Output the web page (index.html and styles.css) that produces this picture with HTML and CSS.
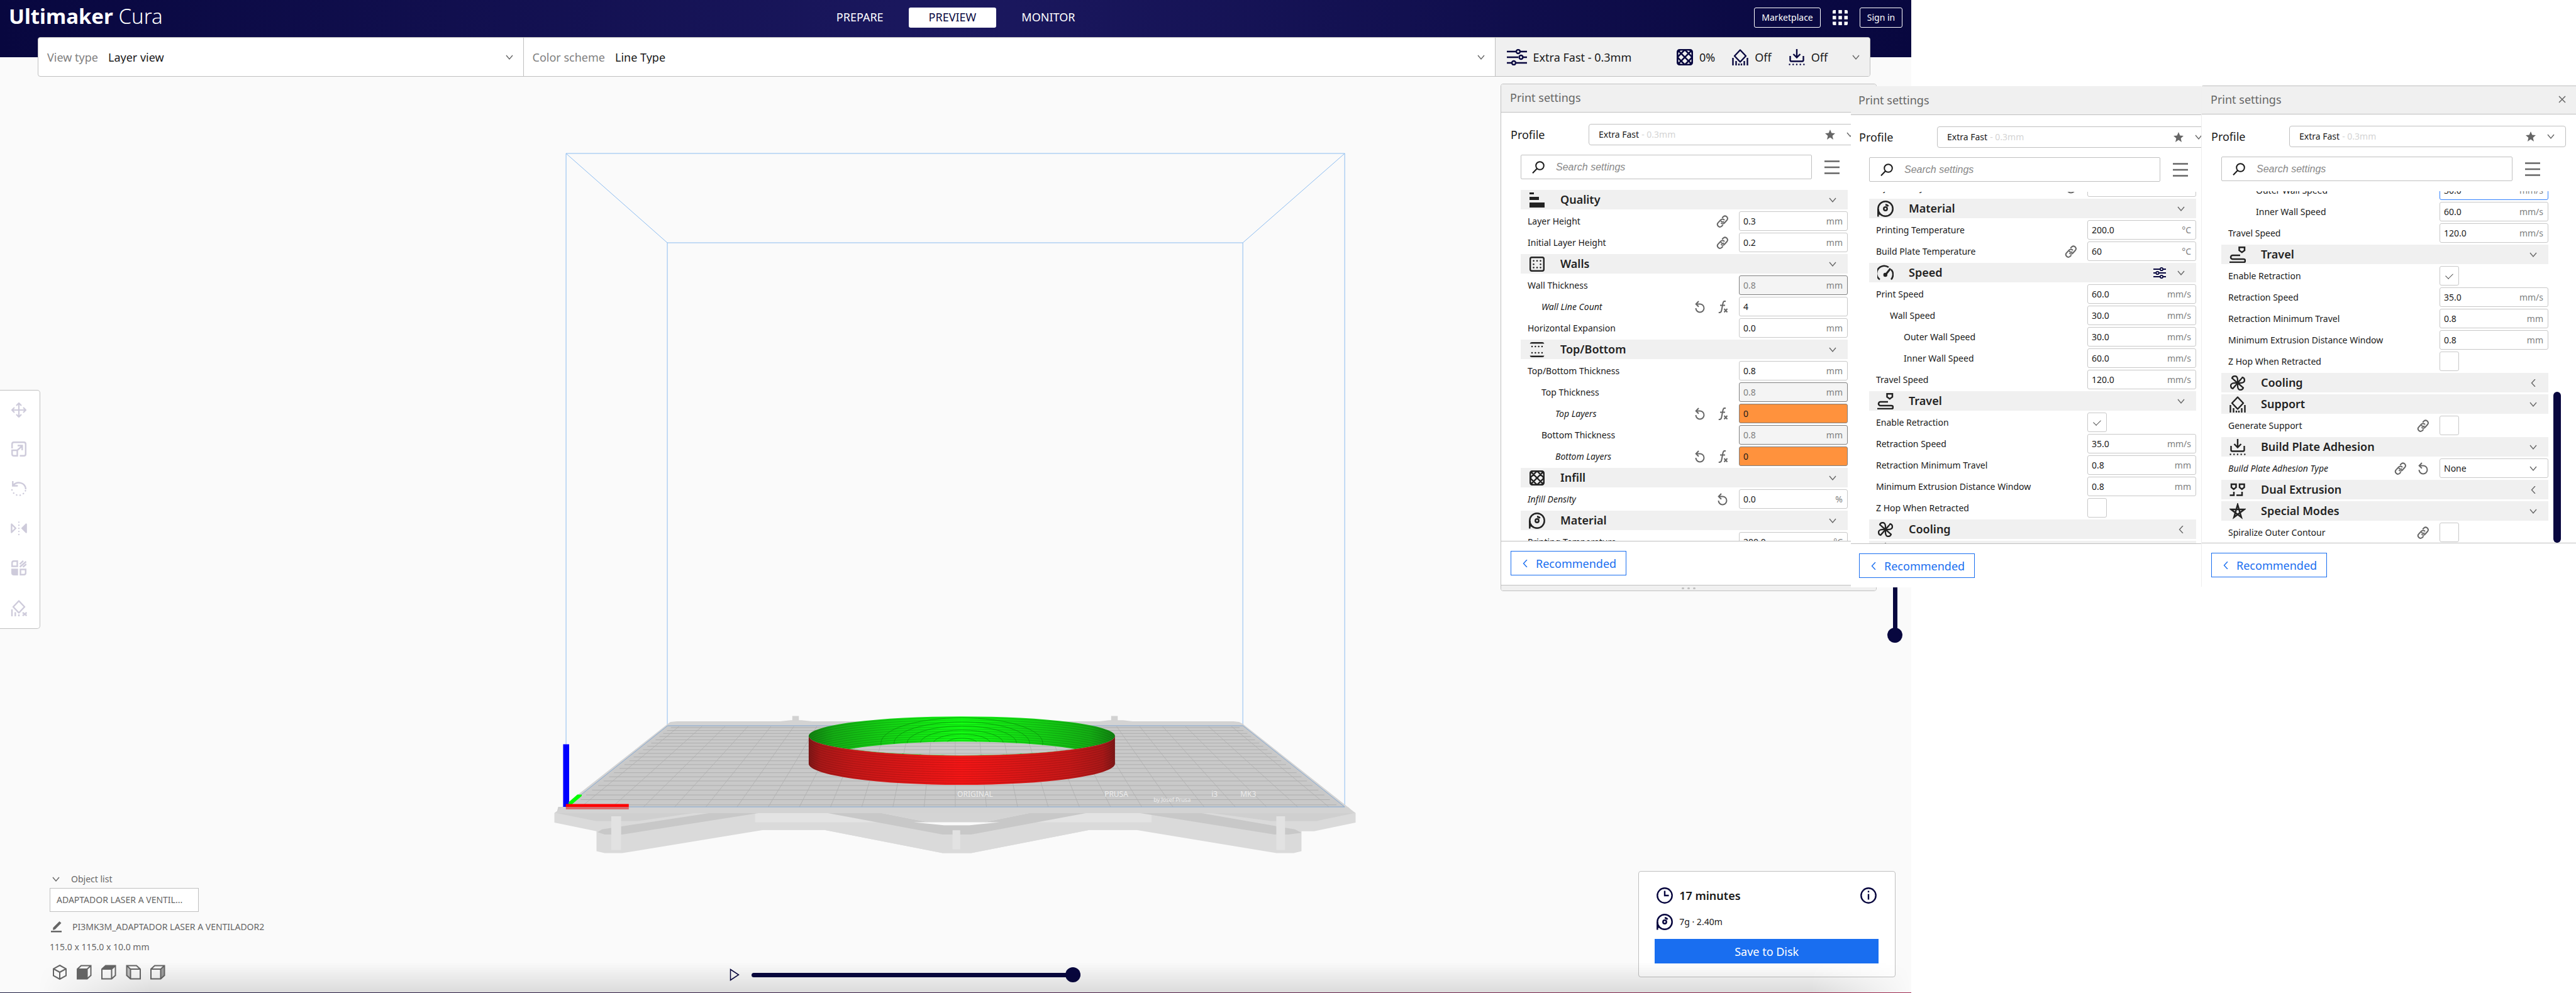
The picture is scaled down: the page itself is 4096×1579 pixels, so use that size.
FILE: index.html
```html
<!DOCTYPE html>
<html lang="en">
<head>
<meta charset="utf-8">
<title>Ultimaker Cura</title>
<link rel="stylesheet" href="styles.css">
</head>
<body>
<svg class="sprite" aria-hidden="true">
  <symbol id="down" viewBox="0 0 12 12"><path d="M1 3l5 6 5-6" fill="none" stroke="currentColor" stroke-width="1.4"/></symbol>
  <symbol id="left" viewBox="0 0 12 12"><path d="M9 0L3.500 6 9 12" fill="none" stroke="currentColor" stroke-width="1.4"/></symbol>
  <symbol id="close" viewBox="0 0 12 12"><path d="M1 1l10 10M11 1L1 11" stroke="currentColor" stroke-width="1.5"/></symbol>
  <symbol id="star" viewBox="0 0 16 16"><path d="M8 0l2.300 5.600 5.700.5-4.400 4 1.400 5.900L8 12.600 3 16l1.400-5.900L0 6.100l5.700-.5z" fill="currentColor"/></symbol>
  <symbol id="search" viewBox="0 0 20 20"><g fill="none" stroke="currentColor" stroke-width="2"><circle cx="12.500" cy="7.500" r="6.300"/><path d="M8 12L1 19.300"/></g></symbol>
  <symbol id="burger" viewBox="0 0 24 22"><path d="M0 1.500h24M0 11h24M0 20.500h24" stroke="currentColor" stroke-width="2.600"/></symbol>
  <symbol id="link" viewBox="0 0 20 20"><g fill="none" stroke="currentColor" stroke-width="2" stroke-linecap="round"><path d="M11.500 10.800A3.500 3.500 0 0 1 7.800 9.800M8 13a4 4 0 0 0 5-.5l4-4.500a4 4 0 0 0-5.500-5.700L9.800 4"/><path d="M12.500 7.500a4 4 0 0 0-5.500.3l-4.300 4.500a4 4 0 0 0 5.500 5.700l1.800-1.800"/></g></symbol>
  <symbol id="revert" viewBox="0 0 20 20"><g fill="none" stroke="currentColor" stroke-width="2"><path d="M4 5.500h6.500a6.500 6.500 0 1 1-7 6.500"/><path d="M8 1L3.700 5.500 8 9.800"/></g></symbol>
  <symbol id="fx" viewBox="0 0 20 20"><g fill="none" stroke="currentColor" stroke-width="2"><path d="M15 1.200c-3-1-4 .8-4.500 3.300L8.500 15c-.6 3-1.700 4.600-4.700 3.700M6 7.500h8"/><path d="M12.500 13l5 5.500M17.500 13l-5 5.500"/></g></symbol>
  <symbol id="sliders" viewBox="0 0 32 26"><g fill="none" stroke="currentColor" stroke-width="2.400"><path d="M0 4h14M22 4h10M0 13h18M26 13h6M0 22h7M15 22h17"/><circle cx="18" cy="4" r="3"/><circle cx="22.500" cy="13" r="3"/><circle cx="11" cy="22" r="3"/></g></symbol>
  <symbol id="tune" viewBox="0 0 20 18"><g fill="none" stroke="currentColor" stroke-width="1.800"><path d="M0 3h10.500M15.500 3H20M0 9h4M9 9h11M0 15h10.500M15.500 15H20"/><circle cx="13" cy="3" r="2.200"/><circle cx="6.500" cy="9" r="2.200"/><circle cx="13" cy="15" r="2.200"/></g></symbol>
  <symbol id="quality" viewBox="0 0 24 24"><path d="M0 0h7v3H0zM0 7h15v5H0zM0 16h24v8H0z" fill="currentColor"/></symbol>
  <symbol id="walls" viewBox="0 0 24 24"><rect x="1.200" y="1.200" width="21.600" height="21.600" rx="2.500" fill="none" stroke="currentColor" stroke-width="2.400"/><path d="M6.500 6.800h11.500M6.500 12.200h.1M17.500 12.200h.1M6.500 17.500h11.500" stroke="currentColor" stroke-width="2.600" stroke-linecap="round" stroke-dasharray=".1 5.400"/></symbol>
  <symbol id="topbottom" viewBox="0 0 24 24"><path d="M.5 2.500Q1 0 3.500 0h17Q23 0 23.500 2.500zM.5 21.500Q1 24 3.500 24h17q2.500 0 3-2.500z" fill="currentColor"/><path d="M4 7h17M4 17h17" stroke="currentColor" stroke-width="2.400" stroke-linecap="round" stroke-dasharray=".1 5.200"/></symbol>
  <symbol id="infill" viewBox="0 0 24 24"><rect x="1.200" y="1.200" width="21.600" height="21.600" rx="3" fill="none" stroke="currentColor" stroke-width="2.400"/><path d="M2 2l20 20M22 2L2 22M12 1l11 11-11 11L1 12zM1 5l4-4M19 1l4 4M1 19l4 4M23 19l-4 4" fill="none" stroke="currentColor" stroke-width="2.400"/></symbol>
  <symbol id="material" viewBox="0 0 26 26"><g fill="none" stroke="currentColor" stroke-width="2.500"><circle cx="13" cy="13" r="11.700"/><circle cx="13" cy="13" r="2.700"/><path d="M13 6.500q3 .3 4.500 2.500" stroke-width="3"/><path d="M1.300 13v12.500"/><path d="M1.300 18l3 4" stroke-width="3"/></g></symbol>
  <symbol id="speed" viewBox="0 0 26 26"><g fill="none" stroke="currentColor" stroke-width="2.500"><path d="M4 23.500A12 12 0 0 1 18 4M22 7.500a12 12 0 0 1 0 16"/><path d="M13 16L21 6" stroke-width="3"/></g><circle cx="12.800" cy="16" r="3.200" fill="currentColor"/></symbol>
  <symbol id="travel" viewBox="0 0 26 26"><g fill="none" stroke="currentColor" stroke-width="2.500"><path d="M15.500 1.200h8.500v5l-4.200 3-4.300-3z"/><path d="M17 14H5a3 3 0 0 0 0 6h17.500a2 2 0 0 1 0 5H0"/></g></symbol>
  <symbol id="cooling" viewBox="0 0 24 24"><g fill="none" stroke="currentColor" stroke-width="2.300" stroke-linejoin="round"><path id="blade" d="M12 12C8 9 4.500 5 3 4.500 4 .5 10-.5 11.500 4c.8 2.500.5 5 .5 8z"/><use href="#blade" transform="rotate(90 12 12)"/><use href="#blade" transform="rotate(180 12 12)"/><use href="#blade" transform="rotate(270 12 12)"/></g></symbol>
  <symbol id="support" viewBox="0 0 26 26"><g fill="none" stroke="currentColor" stroke-width="2.400"><path d="M13 1.500l9 9.500-9 9.500L4 11z" stroke-linejoin="round"/><path d="M1.500 14v12M6.500 19v7M11 23v3M15 23v3M19.500 19v7M24.500 14v12"/></g></symbol>
  <symbol id="adhesion" viewBox="0 0 26 26"><g fill="none" stroke="currentColor" stroke-width="2.400"><path d="M13 0v13M7.500 8l5.500 5.500L18.500 8M2.500 11v6.500q0 2 2 2h17q2 0 2-2V11"/><path d="M1.500 24.500h24" stroke-linecap="round" stroke-dasharray=".1 5.600"/></g></symbol>
  <symbol id="dual" viewBox="0 0 26 26"><g fill="none" stroke="currentColor" stroke-width="2.500"><path d="M3 4h7.500v5L6.800 12 3 9zM16 4h7.500v5l-3.700 3L16 9zM7 16v5.500H.5M20 16v5.500h-9"/></g></symbol>
  <symbol id="special" viewBox="0 0 26 26"><path d="M13 2.500l5.800 20L2.500 10h21L7.200 22.500z" fill="none" stroke="currentColor" stroke-width="2.500"/></symbol>
  <symbol id="clock" viewBox="0 0 26 26"><g fill="none" stroke="currentColor" stroke-width="2.400"><circle cx="13" cy="13" r="11.700"/><path d="M13 5.500V13h6.500"/></g></symbol>
  <symbol id="info" viewBox="0 0 26 26"><g fill="none" stroke="currentColor" stroke-width="2.400"><circle cx="13" cy="13" r="11.700"/><path d="M13 5.500v2.500M13 10.500v9"/></g></symbol>
  <symbol id="apps" viewBox="0 0 24 24"><path d="M0 2q0-2 2-2h3v5.500H0zM9.300 0h5.500v5.500H9.300zM19 0h3q2 0 2 2v3.500h-5zM0 9.300h5.500v5.500H0zM9.300 9.300h5.500v5.500H9.300zM18.500 9.300H24v5.500h-5.500zM0 18.500h5.500V24H2q-2 0-2-2zM9.300 18.500h5.500V24H9.300zM18.500 18.500H24V22q0 2-2 2h-3.500z" fill="currentColor"/></symbol>
  <symbol id="move" viewBox="0 0 24 24"><g fill="none" stroke="currentColor" stroke-width="2.200"><path d="M12 1.500v21M1.500 12h21M8 5l4-4 4 4M8 19l4 4 4-4M5 8l-4 4 4 4M19 8l4 4-4 4"/></g></symbol>
  <symbol id="scale" viewBox="0 0 24 24"><g fill="none" stroke="currentColor" stroke-width="2.400"><path d="M1.200 11V4q0-2.800 2.800-2.800h16q2.800 0 2.800 2.800v16q0 2.800-2.800 2.800h-6.500M1.200 14h8.300v8.800H4q-2.800 0-2.800-2.800zM9.500 14l8-7M10 6.500h7.300V14"/></g></symbol>
  <symbol id="rotate" viewBox="0 0 24 24"><g fill="none" stroke="currentColor" stroke-width="2.400"><path d="M23 13C22 1 8 0 3 7M2.300 0v7.500h8"/><path d="M1 14c3 11 18 12 22 0" stroke-linecap="round" stroke-dasharray=".1 5.600"/></g></symbol>
  <symbol id="mirror" viewBox="0 0 28 24"><path d="M1.500 5v14l7-7z" fill="none" stroke="currentColor" stroke-width="2.600" stroke-linejoin="round"/><path d="M26.500 5v14L19.500 12z" fill="currentColor" stroke="currentColor" stroke-width="2.600" stroke-linejoin="round"/><path d="M14 1.500v22" stroke="currentColor" stroke-width="2.400" stroke-linecap="round" stroke-dasharray=".1 5.200"/></symbol>
  <symbol id="permodel" viewBox="0 0 24 24"><g fill="none" stroke="currentColor" stroke-width="2.400"><path d="M4 1.200h5.500v8.300H1.200V4Q1.200 1.200 4 1.200zM14.500 14.500h8.300V20q0 2.800-2.800 2.800h-5.500zM13.500 6L19 .8M13.500 10.500L23.500 2M18.500 10.500l5.500-4.700"/></g><path d="M0 13.300h10.700V24H4q-4 0-4-4z" fill="currentColor"/></symbol>
  <symbol id="blocker" viewBox="0 0 26 26"><g fill="none" stroke="currentColor" stroke-width="2.400"><path d="M13 1.500l9 9.500-9 9.500L4 11z" stroke-linejoin="round"/><path d="M2 15v11M7.300 19.500V26M13 23v3M19 20l6.500 5M25.500 20L19 25"/></g></symbol>
  <symbol id="pencil" viewBox="0 0 18 18"><path d="M13.500 0l3 2.800L6.500 13 3 13.800 3.500 10zM0 15h17v2.500H0z" fill="currentColor"/></symbol>
  <symbol id="cube3d" viewBox="0 0 24 24"><path d="M12 1l10 5.500v11L12 23 2 17.500v-11zM2 6.500L12 12l10-5.500M12 12v11" fill="none" stroke="currentColor" stroke-width="2"/></symbol>
  <symbol id="cubeface" viewBox="0 0 24 24"><path d="M1 7l6-5.500h15.500V17l-6 5.500H1zM1 7h15.500v15.500M16.500 7l6-5.500" fill="none" stroke="currentColor" stroke-width="2"/></symbol>
</svg>

<main class="app">
  <header class="titlebar">
    <h1 class="logo"><b>Ultimaker</b> Cura</h1>
    <nav class="tabs"><a href="#prepare">PREPARE</a><a href="#preview" class="current">PREVIEW</a><a href="#monitor">MONITOR</a></nav>
    <div class="account"><button class="outline">Marketplace</button><button class="bare" aria-label="Applications"><svg class="i24"><use href="#apps"/></svg></button><button class="outline">Sign in</button></div>
  </header>

  <section class="stagebar">
    <label class="choice"><span>View type</span><select><option>Layer view</option></select><svg class="i12"><use href="#down"/></svg></label>
    <label class="choice"><span>Color scheme</span><select><option>Line Type</option></select><svg class="i12"><use href="#down"/></svg></label>
    <button class="summary">
      <svg class="isliders"><use href="#sliders"/></svg><span class="preset">Extra Fast - 0.3mm</span>
      <svg class="i26"><use href="#infill"/></svg><span>0%</span>
      <svg class="i26"><use href="#support"/></svg><span>Off</span>
      <svg class="i26"><use href="#adhesion"/></svg><span>Off</span>
      <svg class="i12 last"><use href="#down"/></svg>
    </button>
  </section>

  <section class="viewport">
    <svg class="scene" viewBox="0 121 3039 1457" preserveAspectRatio="xMinYMin slice" aria-label="Build plate">
      <defs>
        <linearGradient id="redwall"><stop offset="0" stop-color="#7d1717"/><stop offset=".04" stop-color="#a81818"/><stop offset=".15" stop-color="#c41818"/><stop offset=".5" stop-color="#f41616"/><stop offset=".85" stop-color="#c41818"/><stop offset=".96" stop-color="#a81818"/><stop offset="1" stop-color="#7d1717"/></linearGradient>
        <linearGradient id="greenwall"><stop offset="0" stop-color="#118011"/><stop offset=".08" stop-color="#14ac14"/><stop offset=".25" stop-color="#14d014"/><stop offset=".5" stop-color="#12ff12"/><stop offset=".75" stop-color="#14d014"/><stop offset=".92" stop-color="#14ac14"/><stop offset="1" stop-color="#118011"/></linearGradient>
        <path id="ringline" d="M503 330A280 160 0 0 0 1063 330"/>
        <path id="backline" d="M503 330A280 156 0 0 1 1063 330"/>
        <clipPath id="innerclip"><path clip-rule="evenodd" d="M503 328A280 154 0 0 1 1063 328A280 154 0 0 1 503 328zM578 430A275 173 0 0 1 990 430A280 154 0 0 1 578 430z"/></clipPath>
        <clipPath id="outerclip"><path d="M503 328V545A280 168 0 0 0 1063 545V328A280 154 0 0 1 503 328z"/></clipPath>
      </defs>
      <g class="volume"><path d="M900 1282V243H2138V1282M1061 1153V385H1976V1153M900 243L1061 385M2138 243L1976 385"/></g>
      <g transform="translate(848.4 1103) scale(.86957 .202)">
        <path fill="#dadada" d="M38 935V1010L115 1077V1235L130 1250H162L420 1068H532L748 1250H800L1016 1068H1102L1358 1250H1390L1404 1235V1077H1427L1503 1010V935L1483 886H59z"/>
        <path fill="#e3e3e3" d="M405 930H1130V1008H405z"/>
        <path fill="#dadada" d="M405 1008H1130L1102 1068H1016L800 1250H748L532 1068H420z"/>
        <path fill="#c8c8c8" d="M322 890H582L750 1031H797L958 890H1160L1392 1063L1404 1090L1380 1103H1355L1102 930H1016L800 1103H748L532 930H418L162 1103H130L117 1085L125 1063L390 890z"/>
        <path fill="#d4d4d4" d="M582 890H958L797 1031H750z"/>
        <path fill="#fafafa" d="M695 1007H852L797 1031H750z"/>
        <path fill="#cfcfcf" d="M45 886H300V930L190 998H115L42 935zM1160 890H1490L1500 935L1430 998H1350z"/>
        <path fill="#e2e2e2" d="M142 960H160V1225H142zM766 1070H780V1220H766zM1358 960H1374V1225H1358z"/>
        <path fill="#d2d2d2" d="M473 171H485V213H473zM1056 171H1068V213H1056zM445 215L470 204H490L515 215zM1030 215L1052 204H1078L1100 215z"/>
        <path fill="#d3d3d3" d="M262 213H1280L1290 217L1297 233L1503 935H38L245 233L250 217z"/>
        <path fill="#c9c9c9" d="M245 247H1297L1483 886H59z"/>
        <path class="grid" d="M266 252L87 886M308 252L144 886M350 252L201 886M392 252L258 886M434 252L315 886M476 252L372 886M518 252L429 886M561 252L486 886M603 252L543 886M645 252L600 886M687 252L657 886M729 252L714 886M771 252V886M813 252L828 886M855 252L885 886M897 252L941 886M939 252L998 886M981 252L1055 886M1023 252L1112 886M1066 252L1169 886M1108 252L1226 886M1150 252L1283 886M1192 252L1340 886M1234 252L1397 886M1276 252L1454 886"/>
        <path class="grid strong" d="M251 262H1291M244 285H1298M237 308H1305M230 332H1312M223 358H1319M215 384H1327M208 409H1334M200 436H1342M192 465H1350M183 493H1359M175 523H1367M166 553H1376M157 583H1385M147 617H1395M138 649H1404M128 682H1414M118 718H1424M107 754H1435M96 792H1446M86 829H1456M74 870H1468"/>
        <path class="edge" d="M245 247H1297L1483 886H59z"/>
        <path fill="url(#greenwall)" fill-rule="evenodd" d="M503 328A280 154 0 0 1 1063 328A280 154 0 0 1 503 328zM578 430A275 173 0 0 1 990 430A280 154 0 0 1 578 430z"/>
        <g clip-path="url(#innerclip)" class="layers green"><use href="#backline" y="10"/><use href="#backline" y="28"/><use href="#backline" y="46"/><use href="#backline" y="64"/><use href="#backline" y="82"/><use href="#backline" y="100"/><use href="#backline" y="118"/><use href="#backline" y="136"/><use href="#backline" y="154"/><use href="#backline" y="172"/><use href="#backline" y="190"/></g>
        <g clip-path="url(#innerclip)" class="moire"><ellipse cx="783" cy="385" rx="28" ry="40"/><ellipse cx="783" cy="385" rx="52" ry="72"/><ellipse cx="783" cy="385" rx="76" ry="104"/><ellipse cx="783" cy="385" rx="100" ry="136"/><ellipse cx="783" cy="385" rx="124" ry="168"/><ellipse cx="783" cy="385" rx="148" ry="200"/></g>
        <path fill="url(#redwall)" d="M503 328V545A280 168 0 0 0 1063 545V328A280 154 0 0 1 503 328z"/>
        <g clip-path="url(#outerclip)" class="layers red"><use href="#ringline" y="12"/><use href="#ringline" y="30"/><use href="#ringline" y="48"/><use href="#ringline" y="66"/><use href="#ringline" y="84"/><use href="#ringline" y="102"/><use href="#ringline" y="120"/><use href="#ringline" y="138"/><use href="#ringline" y="156"/><use href="#ringline" y="174"/><use href="#ringline" y="192"/><use href="#ringline" y="210"/></g>
        <path fill="#00f" d="M54 393H65V886H54z"/>
        <path fill="#0f0" d="M80 789H88V800L70 866H64V850z"/>
        <path fill="red" d="M59 864H174V888H59z"/><path fill="#d96c6c" d="M59 888H174V906H59z"/>
      </g>
      <g class="engraving"><text x="1522" y="1266">ORIGINAL</text><text x="1756" y="1266">PRUSA</text><text x="1926" y="1266">i3</text><text x="1972" y="1266">MK3</text><text class="by" x="1834" y="1274">by Josef Prusa</text></g>
    </svg>

    <div class="tools">
      <button aria-label="Move"><svg class="i24"><use href="#move"/></svg></button>
      <button aria-label="Scale"><svg class="i24"><use href="#scale"/></svg></button>
      <button aria-label="Rotate"><svg class="i24"><use href="#rotate"/></svg></button>
      <button aria-label="Mirror"><svg class="i26"><use href="#mirror"/></svg></button>
      <button aria-label="Per model settings"><svg class="i24"><use href="#permodel"/></svg></button>
      <button aria-label="Support blocker"><svg class="i26"><use href="#blocker"/></svg></button>
    </div>

    <input class="layerslider" type="range" value="100" aria-label="Layer">

    <div class="bottom">
      <div class="objects">
        <button class="listtoggle"><svg class="i12"><use href="#down"/></svg>Object list</button>
        <button class="object">ADAPTADOR LASER A VENTIL...</button>
        <div class="job"><svg class="i18"><use href="#pencil"/></svg>PI3MK3M_ADAPTADOR LASER A VENTILADOR2</div>
        <div class="size">115.0 x 115.0 x 10.0 mm</div>
        <div class="cameras">
          <button aria-label="3D view"><svg class="i24"><use href="#cube3d"/></svg></button>
          <button aria-label="Front view"><svg class="i24"><use href="#cubeface"/><path d="M1 7h16v16H1z" fill="currentColor"/></svg></button>
          <button aria-label="Top view"><svg class="i24"><use href="#cubeface"/><path d="M1 7l6-6h16l-6 6z" fill="currentColor"/></svg></button>
          <button aria-label="Left view"><svg class="i24" viewBox="0 0 24 24"><g transform="matrix(-1 0 0 1 24 0)"><use href="#cubeface" width="24" height="24"/><path d="M17 7l6-6v16l-6 6z" fill="currentColor" fill-opacity=".4"/></g></svg></button>
          <button aria-label="Right view"><svg class="i24"><use href="#cubeface"/><path d="M17 7l6-6v16l-6 6z" fill="currentColor" fill-opacity=".6"/></svg></button>
        </div>
      </div>
      <div class="player">
        <button class="bare" aria-label="Play"><svg class="iplay" viewBox="0 0 16 20"><path d="M1.500 1.500v17L14.500 10z" fill="none" stroke="currentColor" stroke-width="1.500"/></svg></button>
        <input class="path" type="range" value="100" aria-label="Path">
      </div>
      <div class="card">
        <div class="time"><svg class="i26"><use href="#clock"/></svg><strong>17 minutes</strong><button class="bare" aria-label="Details"><svg class="i26"><use href="#info"/></svg></button></div>
        <div class="usage"><svg class="i26"><use href="#material"/></svg><span>7g · 2.40m</span></div>
        <button class="save">Save to Disk</button>
      </div>
    </div>
  </section>
</main>

<div class="panels">
  <section class="panel first"><div class="sheet">
    <h2>Print settings</h2>
    <div class="profile"><span>Profile</span><button class="combo">Extra Fast <i>- 0.3mm</i><svg class="i16"><use href="#star"/></svg><svg class="i12"><use href="#down"/></svg></button></div>
    <div class="find"><label class="searchbox"><svg class="i20"><use href="#search"/></svg><input type="text" placeholder="Search settings" aria-label="Search settings"></label><button class="bare" aria-label="Setting visibility"><svg class="iburger"><use href="#burger"/></svg></button></div>
    <div class="list"><div class="rows at-quality">
      <button class="section"><svg class="i24"><use href="#quality"/></svg><span>Quality</span><svg class="i12"><use href="#down"/></svg></button>
      <label class="row"><span>Layer Height</span><svg class="i20"><use href="#link"/></svg><span class="field"><input value="0.3"><em>mm</em></span></label>
      <label class="row"><span>Initial Layer Height</span><svg class="i20"><use href="#link"/></svg><span class="field"><input value="0.2"><em>mm</em></span></label>
      <button class="section"><svg class="i24"><use href="#walls"/></svg><span>Walls</span><svg class="i12"><use href="#down"/></svg></button>
      <label class="row"><span>Wall Thickness</span><span class="field off"><input value="0.8" disabled><em>mm</em></span></label>
      <label class="row in1 changed"><span>Wall Line Count</span><svg class="i20"><use href="#revert"/></svg><svg class="i20"><use href="#fx"/></svg><span class="field"><input value="4"></span></label>
      <label class="row"><span>Horizontal Expansion</span><span class="field"><input value="0.0"><em>mm</em></span></label>
      <button class="section"><svg class="i24"><use href="#topbottom"/></svg><span>Top/Bottom</span><svg class="i12"><use href="#down"/></svg></button>
      <label class="row"><span>Top/Bottom Thickness</span><span class="field"><input value="0.8"><em>mm</em></span></label>
      <label class="row in1"><span>Top Thickness</span><span class="field off"><input value="0.8" disabled><em>mm</em></span></label>
      <label class="row in2 changed"><span>Top Layers</span><svg class="i20"><use href="#revert"/></svg><svg class="i20"><use href="#fx"/></svg><span class="field warn"><input value="0"></span></label>
      <label class="row in1"><span>Bottom Thickness</span><span class="field off"><input value="0.8" disabled><em>mm</em></span></label>
      <label class="row in2 changed"><span>Bottom Layers</span><svg class="i20"><use href="#revert"/></svg><svg class="i20"><use href="#fx"/></svg><span class="field warn"><input value="0"></span></label>
      <button class="section"><svg class="i24"><use href="#infill"/></svg><span>Infill</span><svg class="i12"><use href="#down"/></svg></button>
      <label class="row changed"><span>Infill Density</span><svg class="i20"><use href="#revert"/></svg><span class="field"><input value="0.0"><em>%</em></span></label>
      <button class="section"><svg class="i26"><use href="#material"/></svg><span>Material</span><svg class="i12"><use href="#down"/></svg></button>
      <label class="row"><span>Printing Temperature</span><span class="field"><input value="200.0"><em>°C</em></span></label>
    </div></div>
    <footer><button class="back"><svg class="i12"><use href="#left"/></svg>Recommended</button></footer>
    <div class="grip"><i></i><i></i><i></i></div>
  </div></section>

  <section class="panel second"><div class="sheet">
    <h2>Print settings</h2>
    <div class="profile"><span>Profile</span><button class="combo">Extra Fast <i>- 0.3mm</i><svg class="i16"><use href="#star"/></svg><svg class="i12"><use href="#down"/></svg></button></div>
    <div class="find"><label class="searchbox"><svg class="i20"><use href="#search"/></svg><input type="text" placeholder="Search settings" aria-label="Search settings"></label><button class="bare" aria-label="Setting visibility"><svg class="iburger"><use href="#burger"/></svg></button></div>
    <div class="list"><div class="rows at-material">
      <label class="row changed"><span>Infill Density</span><svg class="i20"><use href="#revert"/></svg><span class="field"><input value="0.0"><em>%</em></span></label>
      <button class="section"><svg class="i26"><use href="#material"/></svg><span>Material</span><svg class="i12"><use href="#down"/></svg></button>
      <label class="row"><span>Printing Temperature</span><span class="field"><input value="200.0"><em>°C</em></span></label>
      <label class="row"><span>Build Plate Temperature</span><svg class="i20"><use href="#link"/></svg><span class="field"><input value="60"><em>°C</em></span></label>
      <button class="section"><svg class="i26"><use href="#speed"/></svg><span>Speed</span><svg class="itune"><use href="#tune"/></svg><svg class="i12"><use href="#down"/></svg></button>
      <label class="row"><span>Print Speed</span><span class="field"><input value="60.0"><em>mm/s</em></span></label>
      <label class="row in1"><span>Wall Speed</span><span class="field"><input value="30.0"><em>mm/s</em></span></label>
      <label class="row in2"><span>Outer Wall Speed</span><span class="field"><input value="30.0"><em>mm/s</em></span></label>
      <label class="row in2"><span>Inner Wall Speed</span><span class="field"><input value="60.0"><em>mm/s</em></span></label>
      <label class="row"><span>Travel Speed</span><span class="field"><input value="120.0"><em>mm/s</em></span></label>
      <button class="section"><svg class="i26"><use href="#travel"/></svg><span>Travel</span><svg class="i12"><use href="#down"/></svg></button>
      <label class="row"><span>Enable Retraction</span><span class="cell"><input type="checkbox" checked></span></label>
      <label class="row"><span>Retraction Speed</span><span class="field"><input value="35.0"><em>mm/s</em></span></label>
      <label class="row"><span>Retraction Minimum Travel</span><span class="field"><input value="0.8"><em>mm</em></span></label>
      <label class="row"><span>Minimum Extrusion Distance Window</span><span class="field"><input value="0.8"><em>mm</em></span></label>
      <label class="row"><span>Z Hop When Retracted</span><span class="cell"><input type="checkbox"></span></label>
      <button class="section"><svg class="i24"><use href="#cooling"/></svg><span>Cooling</span><svg class="i12"><use href="#left"/></svg></button>
      <button class="section" aria-label="Support"><svg class="i26"><use href="#support"/></svg></button>
    </div></div>
    <footer><button class="back"><svg class="i12"><use href="#left"/></svg>Recommended</button></footer>
  </div></section>

  <section class="panel third"><div class="sheet">
    <h2>Print settings<button class="bare" aria-label="Close"><svg class="i12"><use href="#close"/></svg></button></h2>
    <div class="profile"><span>Profile</span><button class="combo">Extra Fast <i>- 0.3mm</i><svg class="i16"><use href="#star"/></svg><svg class="i12"><use href="#down"/></svg></button></div>
    <div class="find"><label class="searchbox"><svg class="i20"><use href="#search"/></svg><input type="text" placeholder="Search settings" aria-label="Search settings"></label><button class="bare" aria-label="Setting visibility"><svg class="iburger"><use href="#burger"/></svg></button></div>
    <div class="list"><div class="rows at-travel">
      <label class="row in2"><span>Outer Wall Speed</span><span class="field active"><input value="30.0"><em>mm/s</em></span></label>
      <label class="row in2"><span>Inner Wall Speed</span><span class="field"><input value="60.0"><em>mm/s</em></span></label>
      <label class="row"><span>Travel Speed</span><span class="field"><input value="120.0"><em>mm/s</em></span></label>
      <button class="section"><svg class="i26"><use href="#travel"/></svg><span>Travel</span><svg class="i12"><use href="#down"/></svg></button>
      <label class="row"><span>Enable Retraction</span><span class="cell"><input type="checkbox" checked></span></label>
      <label class="row"><span>Retraction Speed</span><span class="field"><input value="35.0"><em>mm/s</em></span></label>
      <label class="row"><span>Retraction Minimum Travel</span><span class="field"><input value="0.8"><em>mm</em></span></label>
      <label class="row"><span>Minimum Extrusion Distance Window</span><span class="field"><input value="0.8"><em>mm</em></span></label>
      <label class="row"><span>Z Hop When Retracted</span><span class="cell"><input type="checkbox"></span></label>
      <button class="section"><svg class="i24"><use href="#cooling"/></svg><span>Cooling</span><svg class="i12"><use href="#left"/></svg></button>
      <button class="section"><svg class="i26"><use href="#support"/></svg><span>Support</span><svg class="i12"><use href="#down"/></svg></button>
      <label class="row"><span>Generate Support</span><svg class="i20"><use href="#link"/></svg><span class="cell"><input type="checkbox"></span></label>
      <button class="section"><svg class="i26"><use href="#adhesion"/></svg><span>Build Plate Adhesion</span><svg class="i12"><use href="#down"/></svg></button>
      <label class="row changed"><span>Build Plate Adhesion Type</span><svg class="i20"><use href="#link"/></svg><svg class="i20"><use href="#revert"/></svg><span class="field pick"><select><option>None</option></select><svg class="i12"><use href="#down"/></svg></span></label>
      <button class="section"><svg class="i26"><use href="#dual"/></svg><span>Dual Extrusion</span><svg class="i12"><use href="#left"/></svg></button>
      <button class="section"><svg class="i26"><use href="#special"/></svg><span>Special Modes</span><svg class="i12"><use href="#down"/></svg></button>
      <label class="row"><span>Spiralize Outer Contour</span><svg class="i20"><use href="#link"/></svg><span class="cell"><input type="checkbox"></span></label>
    </div><div class="scrollbar"></div></div>
    <footer><button class="back"><svg class="i12"><use href="#left"/></svg>Recommended</button></footer>
  </div></section>
</div>
</body>
</html>
```
FILE: styles.css
```css
:root {
  --navy: #08073f;
  --line: #c0c0c0;
  --grey: #666;
  --soft: #f0f0f0;
  --blue: #196ef0;
}
* { box-sizing: border-box; }
body {
  position: relative;
  display: flex;
  min-height: 100vh;
  margin: 0;
  overflow: hidden;
  background: #fff;
  color: #191919;
  font: 14px/20px "Noto Sans", sans-serif;
}
button, input, select {
  margin: 0;
  padding: 0;
  border: 0;
  background: none;
  color: inherit;
  font: inherit;
  outline: 0;
}
button { cursor: pointer; }
select { appearance: none; }
svg { display: block; flex: none; }
.sprite { position: absolute; width: 0; height: 0; }
.bare { display: flex; }
.i12 { width: 12px; height: 12px; color: var(--grey); }
.i16 { width: 16px; height: 16px; color: var(--grey); }
.i18 { width: 18px; height: 18px; }
.i20 { width: 20px; height: 20px; }
.i24 { width: 24px; height: 24px; }
.i26 { width: 26px; height: 26px; }
.isliders { width: 32px; height: 26px; }
.itune { width: 20px; height: 18px; color: var(--navy); }
.iburger { width: 24px; height: 22px; color: var(--grey); }
.iplay { width: 16px; height: 20px; color: var(--navy); }

/* application window */
.app {
  display: flex;
  flex: 0 0 74.2%;
  flex-direction: column;
  min-width: 0;
  background: #fafafa;
}
.titlebar {
  display: grid;
  grid-template-columns: 1fr auto 1fr;
  align-items: start;
  height: 91px;
  padding: 12px 14px 0;
  background: linear-gradient(90deg, #08073f, #1b185f 50%, #08073f);
  color: #fff;
}
.logo { margin: 0; font-size: 33px; line-height: 28px; font-weight: 300; }
.logo b { font-weight: 700; }
.tabs { display: flex; gap: 8px; }
.tabs a {
  padding: 0 32px 2px;
  border-radius: 3px;
  color: #fff;
  font-size: 18px;
  line-height: 30px;
  text-decoration: none;
}
.tabs .current { background: #fff; color: var(--navy); }
.account { display: flex; justify-content: flex-end; align-items: center; gap: 19px; }
.outline {
  height: 32px;
  padding: 0 11px;
  border: 1px solid #fff;
  border-radius: 3px;
}
.stagebar {
  position: relative;
  display: grid;
  grid-template-columns: 772fr 1546fr 596fr;
  height: 63px;
  margin: -32px 65px 0 60px;
  border: 1px solid var(--line);
  border-radius: 4px;
  background: #fff;
  font-size: 18px;
  overflow: hidden;
}
.choice {
  display: flex;
  align-items: center;
  gap: 16px;
  min-width: 0;
  padding: 0 16px 0 14px;
  border-right: 1px solid var(--line);
}
.choice span { color: #808080; }
.choice select { flex: 1; }
.summary {
  display: flex;
  align-items: center;
  gap: 10px;
  min-width: 0;
  padding: 0 16px 0 18px;
  background: var(--soft);
}
.summary svg:not(.last) { color: var(--navy); }
.summary span + svg:not(.last) { margin-left: 17px; }
.summary .preset { flex: 1; text-align: left; }
.summary .last { margin-left: 29px; }

/* 3D view */
.viewport {
  position: relative;
  display: flex;
  flex: 1;
  flex-direction: column;
  border-bottom: 1px solid #2a1b44;
  border-image: linear-gradient(90deg, #1c1b40, #3a1b44 50%, #a02a50) 1;
}
.viewport::after {
  content: "";
  position: absolute;
  right: 0;
  bottom: 0;
  left: 0;
  height: 48px;
  background: linear-gradient(transparent, rgba(0, 0, 0, .12));
  mask: linear-gradient(90deg, transparent 60px, #000 240px, #000 calc(100% - 160px), transparent);
  pointer-events: none;
}
.scene { position: absolute; inset: 0; width: 100%; height: 100%; }
.scene path, .scene ellipse { vector-effect: non-scaling-stroke; }
.volume path { fill: none; stroke: #8cbcf0; stroke-width: 1; }
.grid { fill: none; stroke: #b4b4b4; stroke-width: 1; }
.strong { stroke: #aeaeae; }
.edge { fill: none; stroke: #84a8d2; stroke-width: 1; }
.layers { fill: none; stroke-width: 1; opacity: .25; }
.green { stroke: #064d06; }
.red { stroke: #5c0a0a; }
.moire { fill: none; stroke: #0a8a0a; stroke-width: 1; opacity: .7; }
.engraving { fill: #ececec; font-size: 12px; }
.by { font-size: 9px; }
.tools {
  position: relative;
  display: flex;
  flex-direction: column;
  justify-content: space-around;
  width: 64px;
  height: 380px;
  margin-top: 498px;
  border: 1px solid var(--line);
  border-left: 0;
  border-radius: 0 5px 5px 0;
  background: #fff;
  color: #cecbdb;
}
.tools button { display: flex; justify-content: center; width: 60px; }
input[type="range"] { appearance: none; color: var(--navy); }
input[type="range"]::-webkit-slider-runnable-track { border-radius: 4px; background: currentColor; }
input[type="range"]::-webkit-slider-thumb {
  appearance: none;
  width: 24px;
  height: 24px;
  border-radius: 50%;
  background: currentColor;
}
.layerslider {
  position: absolute;
  top: 500px;
  right: 14px;
  width: 24px;
  height: 400px;
  writing-mode: vertical-lr;
}
.layerslider::-webkit-slider-runnable-track { width: 7px; }
.layerslider::-webkit-slider-thumb { margin-left: -9px; }
.bottom {
  position: relative;
  display: grid;
  grid-template-columns: 38.18% auto 1fr;
  align-items: end;
  margin-top: auto;
  padding-bottom: 16px;
}
.objects { padding: 0 0 4px 79px; color: var(--grey); }
.listtoggle { display: flex; align-items: center; gap: 18px; padding-left: 4px; }
.object {
  display: block;
  width: 237px;
  height: 38px;
  margin-top: 4px;
  padding: 0 0 0 10px;
  border: 1px solid var(--line);
  background: #fff;
  text-align: left;
}
.job { display: flex; align-items: center; gap: 16px; margin-top: 14px; padding-left: 2px; }
.size { margin-top: 12px; }
.cameras { display: flex; gap: 15px; margin-top: 18px; padding-left: 4px; }
.cameras button { display: flex; }
.player { display: flex; align-items: center; gap: 19px; }
.path { width: 523px; height: 24px; }
.path::-webkit-slider-runnable-track { height: 7px; }
.path::-webkit-slider-thumb { margin-top: -9px; }
.card {
  justify-self: end;
  width: 409px;
  margin: 0 25px 8px 0;
  padding: 25px 26px 21px 25px;
  border: 1px solid var(--line);
  border-radius: 4px;
  background: #fff;
}
.time, .usage { display: flex; align-items: center; gap: 10px; padding: 0 3px; }
.time svg, .usage svg { color: var(--navy); }
.time strong { flex: 1; font-size: 18px; line-height: 26px; font-weight: 600; }
.usage { margin-top: 16px; }
.save {
  width: 100%;
  height: 39px;
  margin-top: 14px;
  background: var(--blue);
  color: #fff;
  font-size: 18px;
}

/* print settings panels */
.panels {
  position: absolute;
  top: 133px;
  right: 0;
  display: flex;
  align-items: flex-start;
}
.panel { position: relative; border: 1px solid var(--line); background: #fff; overflow: hidden; }
.sheet { width: 596px; }
.first { width: 598px; margin-right: -41px; border-radius: 4px; }
.second { width: 557px; margin-top: 4px; border: 0; border-top: 1px solid var(--soft); }
.second .sheet { width: 600px; margin-left: -2px; }
.third {
  width: 596px;
  margin-top: 3px;
  border-right: 0;
  border-bottom: 0;
  border-left-color: #eee;
  border-radius: 4px 0 0 0;
}
.panel h2 {
  display: flex;
  align-items: center;
  justify-content: space-between;
  height: 45px;
  margin: 0;
  padding: 0 17px 2px 14px;
  border-bottom: 1px solid var(--line);
  background: var(--soft);
  color: var(--grey);
  font-size: 18px;
  font-weight: 400;
}
.profile { display: flex; align-items: center; padding: 18px 0 0 15px; font-size: 18px; }
.profile > span { width: 124px; }
.combo {
  display: flex;
  align-items: center;
  width: 440px;
  height: 34px;
  padding: 0 17px 0 15px;
  border: 1px solid var(--line);
  border-radius: 4px;
  background: #fff;
  font-size: 14px;
}
.combo i { flex: 1; padding-left: 4px; color: #d4d4d4; font-style: normal; text-align: left; }
.combo .i12 { margin-left: 18px; }
.find { display: flex; align-items: center; gap: 20px; padding: 15px 0 16px 31px; }
.searchbox {
  display: flex;
  align-items: center;
  gap: 18px;
  width: 463px;
  height: 39px;
  padding-left: 17px;
  border: 1px solid var(--line);
  border-radius: 2px;
}
.searchbox input { flex: 1; font: italic 16px/20px "Liberation Sans", sans-serif; }
.searchbox input::placeholder { color: #888; opacity: 1; }
.list { position: relative; height: 559px; padding-left: 31px; overflow: hidden; }
.rows { display: flex; flex-direction: column; gap: 3px; width: 520px; }
.at-quality { margin-top: 1px; }
.at-material { margin-top: -23px; }
.at-travel { margin-top: -17px; }
.section, .row { display: flex; align-items: center; flex: none; height: 31px; }
.section {
  padding: 0 18px 0 14px;
  background: var(--soft);
  color: #222;
  font-size: 18px;
  font-weight: 600;
  text-align: left;
}
.section .i26 { margin: 0 -1px; }
.section span { flex: 1; margin-left: 25px; padding-bottom: 2px; }
.section .itune { margin-right: 18px; }
.row { padding-left: 11px; }
.in1 { padding-left: 33px; }
.in2 { padding-left: 55px; }
.row > span:first-child { flex: 1; }
.row > svg { margin-right: 16px; color: var(--grey); }
.changed > span:first-child { font-style: italic; }
.field, .cell { display: flex; width: 173px; height: 31px; }
.field {
  align-items: center;
  padding: 0 7px 0 6px;
  border: 1px solid #c8c8c8;
  border-radius: 3px;
  background: #fff;
}
.field input, .field select { flex: 1; min-width: 0; }
.field em { color: #808080; font-style: normal; }
.off { border-color: #808080; background: #f4f4f4; }
.off input { color: #808080; }
.warn { border-color: #808080; background: #ff923d; }
.active { border-color: #3282ff; }
.pick { padding-right: 17px; }
input[type="checkbox"] {
  display: grid;
  place-items: center;
  width: 31px;
  height: 31px;
  appearance: none;
  border: 1px solid #c8c8c8;
  border-radius: 3px;
  background: #fff;
}
input[type="checkbox"]:checked::after {
  content: "";
  width: 6px;
  height: 10px;
  margin-top: -2px;
  border: solid #444;
  border-width: 0 1px 1px 0;
  transform: rotate(45deg);
}
.scrollbar {
  position: absolute;
  right: 25px;
  bottom: 0;
  width: 12px;
  height: 240px;
  border-radius: 6px;
  background: var(--navy);
}
.panel footer { height: 70px; padding: 15px 0 0 15px; border-top: 1px solid var(--line); }
.back {
  display: flex;
  align-items: center;
  gap: 11px;
  height: 39px;
  padding: 0 15px 0 16px;
  border: 1px solid var(--blue);
  color: var(--blue);
  font-size: 18px;
}
.back .i12 { color: var(--blue); }
.grip {
  display: flex;
  justify-content: center;
  align-items: center;
  gap: 5px;
  height: 9px;
  border-top: 1px solid var(--line);
  background: var(--soft);
}
.grip i { width: 4px; height: 3px; border-radius: 2px; background: var(--line); }
```
